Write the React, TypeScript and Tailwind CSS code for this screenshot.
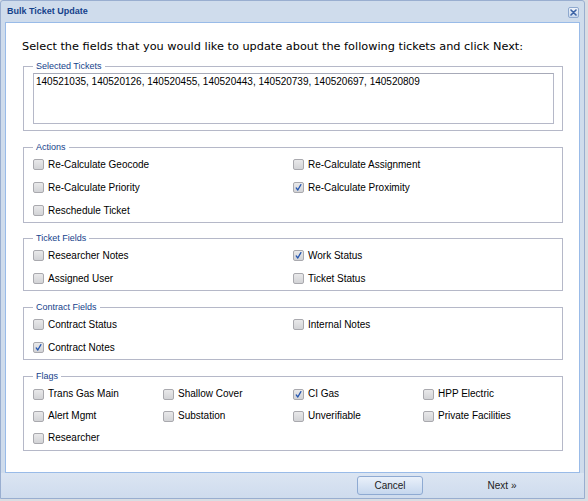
import React from "react";

const sans = "font-['Liberation_Sans',Arial,sans-serif]";

function Box({ checked }: { checked?: boolean }) {
  return (
    <span className="w-[11px] h-[11px] shrink-0 border border-[#a9a9ae] rounded-[2px] bg-gradient-to-b from-[#e9e9ea] to-[#d2d3d6] flex items-center justify-center">
      {checked && (
        <svg width="9" height="9" viewBox="0 0 9 9">
          <path d="M2.2 4.9 L3.8 7 L6.9 1.6" fill="none" stroke="#2456b0" strokeWidth="1.3" strokeLinecap="round" strokeLinejoin="round" />
        </svg>
      )}
    </span>
  );
}

function Item({ label, checked }: { label: string; checked?: boolean }) {
  return (
    <div className="h-[23px] flex items-center">
      <Box checked={checked} />
      <span className={`ml-[4px] text-[10px] leading-[12px] text-[#000] ${sans}`}>{label}</span>
    </div>
  );
}

function Group({ title, children, className = "" }: { title: string; children: React.ReactNode; className?: string }) {
  return (
    <fieldset className={`mx-[17px] w-[540px] border border-[#b5b8c8] pl-[9px] pr-[8px] pt-0 pb-0 min-w-0 ${className}`}>
      <legend className={`px-[3px] text-[9px] leading-[11px] text-[#15428b] ${sans}`}>{title}</legend>
      {children}
    </fieldset>
  );
}

export default function App() {
  return (
    <div className="w-[588px] h-[501px] bg-[#d9dde3] overflow-hidden">
      <div className="w-[585px] h-[499px] border border-[#99aed0] rounded-t-[3px] bg-[#cfdcec] flex flex-col">
        <div className="h-[21px] flex items-center justify-between pl-[6px] pr-[5px]">
          <span className={`text-[9px] font-bold text-[#15428b] ${sans}`}>Bulk Ticket Update</span>
          <span className="w-[11px] h-[11px] border border-[#8fa9cf] rounded-[2px] bg-gradient-to-b from-[#eef3fa] to-[#c8d7ec] flex items-center justify-center mt-[1px]">
            <svg width="7" height="7" viewBox="0 0 7 7">
              <path d="M1 1 L6 6 M6 1 L1 6" stroke="#3b62a5" strokeWidth="1.6" strokeLinecap="round" />
            </svg>
          </span>
        </div>
        <div className="flex px-[4px]">
          <div className="w-[575px] h-[451px] border border-[#99bbe8] bg-white pt-[18px]">
            <div className="pl-[16px] h-[12px] leading-[12px] text-[11.3px] text-[#000] font-['DejaVu_Sans',Verdana,sans-serif] whitespace-nowrap">
              Select the fields that you would like to update about the following tickets and click Next:
            </div>
            <Group title="Selected Tickets" className="mt-[8px] pb-[6px]">
              <div className="pt-[1px]">
                <textarea
                  readOnly
                  value="140521035, 140520126, 140520455, 140520443, 140520739, 140520697, 140520809"
                  className={`block w-[521px] h-[51px] resize-none overflow-hidden border border-[#b5b8c8] border-t-[#a7aab8] px-[2px] py-[2px] text-[10px] leading-[12px] text-[#000] outline-none ${sans}`}
                />
              </div>
            </Group>
            <Group title="Actions" className="mt-[11px]">
              <div className="grid grid-cols-[260px_260px]">
                <Item label="Re-Calculate Geocode" />
                <Item label="Re-Calculate Assignment" />
                <Item label="Re-Calculate Priority" />
                <Item label="Re-Calculate Proximity" checked />
                <Item label="Reschedule Ticket" />
              </div>
            </Group>
            <Group title="Ticket Fields" className="mt-[10px]">
              <div className="grid grid-cols-[260px_260px]">
                <Item label="Researcher Notes" />
                <Item label="Work Status" checked />
                <Item label="Assigned User" />
                <Item label="Ticket Status" />
              </div>
            </Group>
            <Group title="Contract Fields" className="mt-[11px]">
              <div className="grid grid-cols-[260px_260px]">
                <Item label="Contract Status" />
                <Item label="Internal Notes" />
                <Item label="Contract Notes" checked />
              </div>
            </Group>
            <Group title="Flags" className="mt-[11px]">
              <div className="grid grid-cols-[130px_130px_130px_130px] grid-rows-[22px_22px_22px] items-center pt-[1px] pb-[1px]">
                <Item label="Trans Gas Main" />
                <Item label="Shallow Cover" />
                <Item label="CI Gas" checked />
                <Item label="HPP Electric" />
                <Item label="Alert Mgmt" />
                <Item label="Substation" />
                <Item label="Unverifiable" />
                <Item label="Private Facilities" />
                <Item label="Researcher" />
              </div>
            </Group>
          </div>
        </div>
        <div className="h-[24px] flex items-center justify-end gap-[46px] pr-[49px] bg-gradient-to-b from-[#dbe5f2] to-[#cfdcee]">
          <div className={`w-[66px] h-[19px] rounded-[3px] border border-[#8eaad2] bg-gradient-to-b from-[#eaf1fa] to-[#c6d7ee] flex items-center justify-center text-[10px] text-[#222] ${sans}`}>
            Cancel
          </div>
          <div className={`w-[66px] h-[19px] flex items-center justify-center text-[10px] text-[#222] ${sans}`}>
            Next »
          </div>
        </div>
      </div>
    </div>
  );
}
